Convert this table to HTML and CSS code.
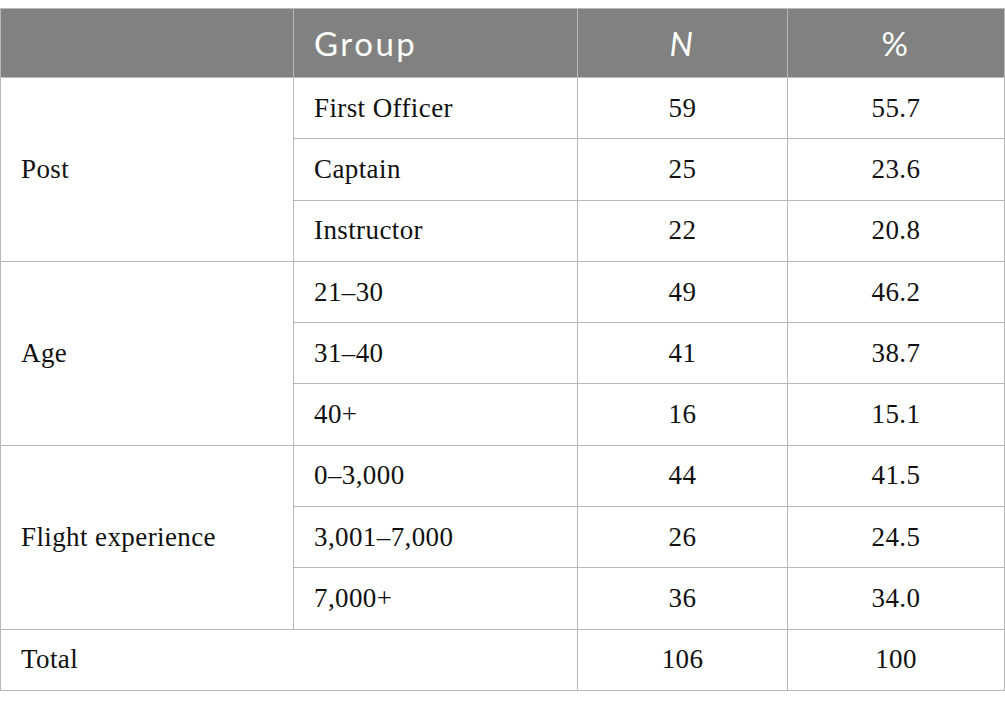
FILE: index.html
```html
<!DOCTYPE html>
<html lang="en">
<head>
  <meta charset="UTF-8">
  <title>Participants</title>
  <link rel="stylesheet" href="styles.css">
</head>
<body>

<table class="stats">
  <colgroup>
    <col class="col-cat">
    <col class="col-group">
    <col class="col-n">
    <col class="col-pct">
  </colgroup>
  <thead>
    <tr>
      <th></th>
      <th class="left">Group</th>
      <th><i>N</i></th>
      <th>%</th>
    </tr>
  </thead>
  <tbody>
    <tr>
      <td rowspan="3">Post</td>
      <td>First Officer</td>
      <td class="num">59</td>
      <td class="num">55.7</td>
    </tr>
    <tr>
      <td>Captain</td>
      <td class="num">25</td>
      <td class="num">23.6</td>
    </tr>
    <tr>
      <td>Instructor</td>
      <td class="num">22</td>
      <td class="num">20.8</td>
    </tr>
    <tr>
      <td rowspan="3">Age</td>
      <td>21–30</td>
      <td class="num">49</td>
      <td class="num">46.2</td>
    </tr>
    <tr>
      <td>31–40</td>
      <td class="num">41</td>
      <td class="num">38.7</td>
    </tr>
    <tr>
      <td>40+</td>
      <td class="num">16</td>
      <td class="num">15.1</td>
    </tr>
    <tr>
      <td rowspan="3">Flight experience</td>
      <td>0–3,000</td>
      <td class="num">44</td>
      <td class="num">41.5</td>
    </tr>
    <tr>
      <td>3,001–7,000</td>
      <td class="num">26</td>
      <td class="num">24.5</td>
    </tr>
    <tr>
      <td>7,000+</td>
      <td class="num">36</td>
      <td class="num">34.0</td>
    </tr>
    <tr>
      <td colspan="2">Total</td>
      <td class="num">106</td>
      <td class="num">100</td>
    </tr>
  </tbody>
</table>

</body>
</html>
```

FILE: styles.css
```css
html, body {
  margin: 0;
  padding: 0;
  background-color: #ffffff;
}

body {
  padding-top: 8px;
}

.stats {
  width: 1004px;
  border-collapse: collapse;
  table-layout: fixed;
  font-family: "Liberation Serif", serif;
  color: #111111;
}

.col-cat { width: 293px; }
.col-group { width: 284px; }
.col-n { width: 210px; }
.col-pct { width: 217px; }

.stats th, .stats td {
  border: 1.5px solid #b8b8b8;
  padding: 0 20px;
  box-sizing: border-box;
}

.stats th {
  height: 69px;
  background-color: #808180;
  color: #ffffff;
  font-family: Lato, "Open Sans", sans-serif;
  font-weight: normal;
  font-size: 33px;
  letter-spacing: 2.5px;
  text-align: center;
}

.stats th.left {
  text-align: left;
}

.stats td {
  height: 61.3px;
  font-size: 27px;
  letter-spacing: 0.4px;
  text-align: left;
}

.stats td.num {
  text-align: center;
}
```
